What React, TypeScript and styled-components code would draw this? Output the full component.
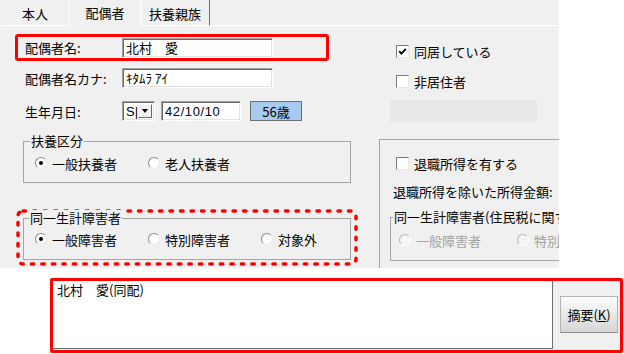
import React from 'react';
import styled, { createGlobalStyle } from 'styled-components';

const Global = createGlobalStyle`
  html, body { margin: 0; padding: 0; background: #fff; }
  body { font-family: "Noto Sans CJK JP", "Liberation Sans", sans-serif; font-size: 13px; color: #000; }
  * { box-sizing: border-box; }
`;

const Screen = styled.div`
  width: 624px;
  height: 354px;
  overflow: hidden;
  background: #fff;
`;

const Panel = styled.div`
  width: 559px;
  height: 268px;
  background: #f0f0f0;
  overflow: hidden;
  display: flex;
  flex-direction: column;
`;

const TabBar = styled.div`
  display: flex;
  height: 26px;
  flex: none;
`;

const Tab = styled.div<{ $active?: boolean; $left?: boolean; $right?: boolean }>`
  width: 70px;
  height: 26px;
  display: flex;
  align-items: center;
  justify-content: center;
  padding-top: ${(p) => (p.$active ? '0' : '2px')};
  border-bottom: 1px solid ${(p) => (p.$active ? 'transparent' : '#fff')};
  border-left: 1px solid ${(p) => (p.$left ? '#fff' : 'transparent')};
  border-right: 1px solid ${(p) => (p.$right ? '#6a6a6a' : p.$active ? 'transparent' : '#fff')};
`;

const TabFill = styled.div`
  flex: 1;
  border-bottom: 1px solid #fff;
`;

const Body = styled.div`
  flex: 1;
  display: grid;
  grid-template-columns: 379px 1fr;
`;

const LeftCol = styled.div`
  padding: 8px 0 0 15px;
  display: flex;
  flex-direction: column;
  align-items: flex-start;
`;

const NameHighlight = styled.div`
  width: 314px;
  height: 27px;
  border: 3px solid #ff0000;
  border-radius: 3px;
  display: flex;
  align-items: center;
  padding-left: 7px;
`;

const FieldRow = styled.div<{ $mt: number }>`
  display: flex;
  align-items: center;
  height: 20px;
  padding-left: 10px;
  margin-top: ${(p) => p.$mt}px;
`;

const Label = styled.span`
  width: 97px;
  flex: none;
  white-space: nowrap;
`;

const sunken = `
  background: #fff;
  border-top: 1px solid #a0a0a0;
  border-left: 1px solid #a0a0a0;
  border-right: 1px solid #fff;
  border-bottom: 1px solid #fff;
  box-shadow: inset 1px 1px 0 #696969, inset -1px -1px 0 #e3e3e3;
`;

const TextInput = styled.div<{ $w: number }>`
  ${sunken}
  width: ${(p) => p.$w}px;
  height: 20px;
  padding: 0 0 0 3px;
  line-height: 18px;
  white-space: nowrap;
  overflow: hidden;
`;

const DateText = styled.span`
  font-family: "Liberation Sans", sans-serif;
  font-size: 13px;
  letter-spacing: 0.6px;
`;

const Select = styled.div`
  ${sunken}
  width: 33px;
  height: 20px;
  display: flex;
  align-items: stretch;
  padding: 2px 2px 2px 2px;
`;

const SelectText = styled.span`
  flex: 1;
  font-family: "Liberation Sans", sans-serif;
  font-size: 13px;
  line-height: 15px;
  padding-left: 1px;
`;

const DropBtn = styled.span`
  width: 15px;
  background: #f0f0f0;
  border-top: 1px solid #fff;
  border-left: 1px solid #fff;
  border-right: 1px solid #696969;
  border-bottom: 1px solid #696969;
  display: flex;
  align-items: center;
  justify-content: center;
  &::after {
    content: '';
    border-left: 3.5px solid transparent;
    border-right: 3.5px solid transparent;
    border-top: 4px solid #000;
  }
`;

const AgeBtn = styled.div`
  width: 52px;
  height: 20px;
  margin-left: 9px;
  background: #a6caf0;
  border: 1px solid #6f6f6f;
  display: flex;
  align-items: center;
  justify-content: center;
`;

const Group = styled.div<{ $w: number; $h: number; $mt: number; $ml: number; $pt?: number; $pl: number }>`
  position: relative;
  width: ${(p) => p.$w}px;
  height: ${(p) => p.$h}px;
  margin-top: ${(p) => p.$mt}px;
  margin-left: ${(p) => p.$ml}px;
  border: 1px solid #a5a5a5;
  display: flex;
  align-items: center;
  padding-top: ${(p) => p.$pt ?? 0}px;
  padding-left: ${(p) => p.$pl}px;
  flex: none;
`;

const Legend = styled.span<{ $left: number }>`
  position: absolute;
  top: -9px;
  left: ${(p) => p.$left}px;
  background: #f0f0f0;
  padding: 0 1px;
  line-height: 16px;
  white-space: nowrap;
`;

const RadioItem = styled.div<{ $w: number; $disabled?: boolean }>`
  width: ${(p) => p.$w}px;
  flex: none;
  display: flex;
  align-items: center;
  gap: 5px;
  white-space: nowrap;
  color: ${(p) => (p.$disabled ? '#a3a3a3' : '#000')};
`;

const RadioDot = styled.span<{ $on?: boolean; $disabled?: boolean }>`
  width: 12px;
  height: 12px;
  border-radius: 50%;
  flex: none;
  background: ${(p) => (p.$disabled ? '#f4f4f4' : '#fff')};
  border: 1px solid;
  border-color: ${(p) => (p.$disabled ? '#b8b8b8 #fff #fff #b8b8b8' : '#8a8a8a #e8e8e8 #e8e8e8 #8a8a8a')};
  display: flex;
  align-items: center;
  justify-content: center;
  &::after {
    content: '';
    width: 4px;
    height: 4px;
    border-radius: 50%;
    background: ${(p) => (p.$on ? '#000' : 'transparent')};
  }
`;

const DashedWrap = styled.div`
  position: relative;
  width: 342px;
  height: 57px;
  margin-top: 26px;
  margin-left: 1px;
  padding: 9px 0 0 7px;
`;

const DashOverlay = styled.svg`
  position: absolute;
  left: 0;
  top: 0;
  pointer-events: none;
`;

const RightCol = styled.div`
  padding-top: 19px;
  display: flex;
  flex-direction: column;
  align-items: flex-start;
  min-width: 0;
`;

const CheckRow = styled.div<{ $mt: number; $ml: number }>`
  display: flex;
  align-items: center;
  gap: 5px;
  height: 13px;
  margin-top: ${(p) => p.$mt}px;
  margin-left: ${(p) => p.$ml}px;
  white-space: nowrap;
`;

const CheckBox = styled.span`
  width: 13px;
  height: 13px;
  flex: none;
  background: #fff;
  border: 1px solid;
  border-color: #7a7a7a #e8e8e8 #e8e8e8 #7a7a7a;
  display: flex;
  align-items: center;
  justify-content: center;
`;

const DisabledBox = styled.div`
  width: 147px;
  height: 23px;
  margin-top: 12px;
  margin-left: 11px;
  background: #e8e8e8;
`;

const OuterGroup = styled.div`
  width: 320px;
  height: 200px;
  margin-top: 16px;
  border-top: 1px solid #a5a5a5;
  border-left: 1px solid #a5a5a5;
  padding-top: 17px;
  display: flex;
  flex-direction: column;
  align-items: flex-start;
  flex: none;
`;

const PlainText = styled.div<{ $mt: number; $ml: number }>`
  margin-top: ${(p) => p.$mt}px;
  margin-left: ${(p) => p.$ml}px;
  line-height: 14px;
  white-space: nowrap;
`;

const BottomArea = styled.div`
  padding: 10px 0 0 50px;
`;

const RedFrame = styled.div`
  width: 573px;
  height: 75px;
  border: 3px solid #ff0000;
  border-radius: 2px;
  display: flex;
`;

const Memo = styled.div`
  width: 500px;
  background: #fff;
  border-right: 1px solid #6d6d6d;
  border-bottom: 1px solid #6d6d6d;
  margin-bottom: 1px;
  padding: 2px 0 0 4px;
  line-height: 14px;
  white-space: pre;
`;

const SideArea = styled.div`
  flex: 1;
  background: #f0f0f0;
  padding: 15px 0 0 7px;
`;

const MemoBtn = styled.div`
  width: 58px;
  height: 37px;
  background: linear-gradient(#fdfdfd, #d6d6d6);
  border: 1px solid #b4b4b4;
  border-bottom-color: #8c8c8c;
  display: flex;
  align-items: center;
  justify-content: center;
  font-size: 13px;
`;

const Key = styled.span`
  text-decoration: underline;
`;

function Radio({ label, on, disabled, w }: { label: string; on?: boolean; disabled?: boolean; w: number }) {
  return (
    <RadioItem $w={w} $disabled={disabled}>
      <RadioDot $on={on} $disabled={disabled} />
      {label}
    </RadioItem>
  );
}

function Check({ checked }: { checked?: boolean }) {
  return (
    <CheckBox>
      {checked && (
        <svg width="9" height="9" viewBox="0 0 9 9">
          <path d="M1.2 4.2 L3.4 6.6 L7.8 1.8" fill="none" stroke="#000" strokeWidth="1.8" />
        </svg>
      )}
    </CheckBox>
  );
}

export default function App() {
  return (
    <Screen>
      <Global />
      <Panel>
        <TabBar>
          <Tab>本人</Tab>
          <Tab $active>配偶者</Tab>
          <Tab $left $right>扶養親族</Tab>
          <TabFill />
        </TabBar>
        <Body>
          <LeftCol>
            <NameHighlight>
              <Label>配偶者名:</Label>
              <TextInput $w={151}>北村　愛</TextInput>
            </NameHighlight>
            <FieldRow $mt={7}>
              <Label>配偶者名カナ:</Label>
              <TextInput $w={151}>ｷﾀﾑﾗ ｱｲ</TextInput>
            </FieldRow>
            <FieldRow $mt={13}>
              <Label>生年月日:</Label>
              <Select>
                <SelectText>S|</SelectText>
                <DropBtn />
              </Select>
              <TextInput $w={80} style={{ marginLeft: 6 }}>
                <DateText>42/10/10</DateText>
              </TextInput>
              <AgeBtn>56歳</AgeBtn>
            </FieldRow>
            <Group $w={328} $h={42} $mt={20} $ml={8} $pt={2} $pl={11}>
              <Legend $left={6}>扶養区分</Legend>
              <Radio w={113} label="一般扶養者" on />
              <Radio w={113} label="老人扶養者" />
            </Group>
            <DashedWrap>
              <DashOverlay width="342" height="57" viewBox="0 0 342 57">
                <rect
                  x="2"
                  y="2"
                  width="338"
                  height="53"
                  rx="5"
                  fill="none"
                  stroke="#ff0000"
                  strokeWidth="3.5"
                  strokeDasharray="2.5 8"
                  strokeLinecap="round"
                />
              </DashOverlay>
              <Group $w={328} $h={42} $mt={0} $ml={0} $pl={11}>
                <Legend $left={5}>同一生計障害者</Legend>
                <Radio w={113} label="一般障害者" on />
                <Radio w={113} label="特別障害者" />
                <Radio w={90} label="対象外" />
              </Group>
            </DashedWrap>
          </LeftCol>
          <RightCol>
            <CheckRow $mt={0} $ml={17}>
              <Check checked />
              同居している
            </CheckRow>
            <CheckRow $mt={17} $ml={17}>
              <Check />
              非居住者
            </CheckRow>
            <DisabledBox />
            <OuterGroup>
              <CheckRow $mt={0} $ml={16}>
                <Check />
                退職所得を有する
              </CheckRow>
              <PlainText $mt={15} $ml={13}>
                退職所得を除いた所得金額:
              </PlainText>
              <Group $w={300} $h={44} $mt={18} $ml={10} $pt={2} $pl={8}>
                <Legend $left={2}>同一生計障害者(住民税に関する)</Legend>
                <Radio w={118} label="一般障害者" disabled />
                <Radio w={118} label="特別障害者" disabled />
              </Group>
            </OuterGroup>
          </RightCol>
        </Body>
      </Panel>
      <BottomArea>
        <RedFrame>
          <Memo>北村　愛(同配)</Memo>
          <SideArea>
            <MemoBtn>
              摘要(<Key>K</Key>)
            </MemoBtn>
          </SideArea>
        </RedFrame>
      </BottomArea>
    </Screen>
  );
}
